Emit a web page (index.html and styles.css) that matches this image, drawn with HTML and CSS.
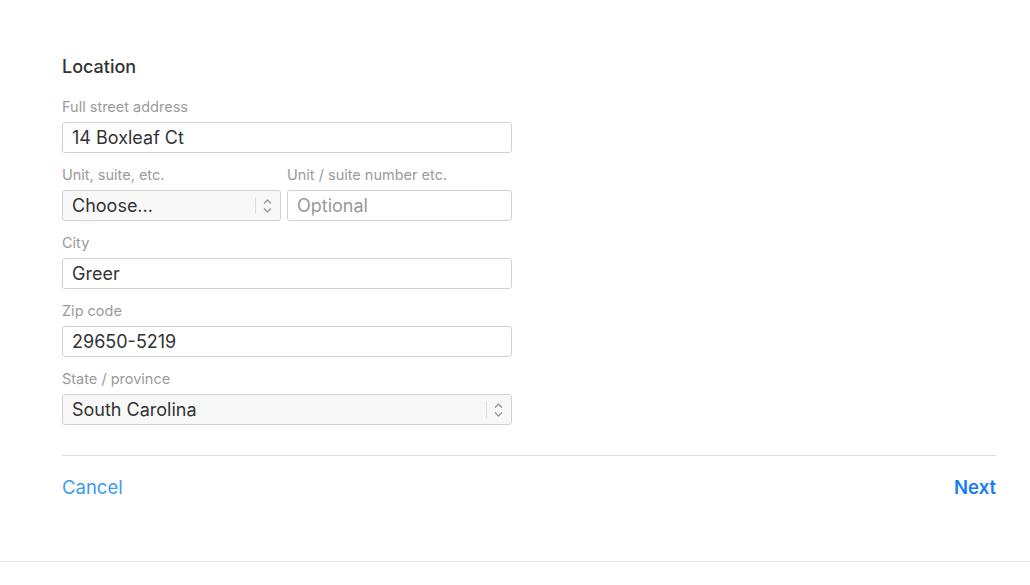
FILE: index.html
```html
<!DOCTYPE html>
<html lang="en">
<head>
    <meta charset="UTF-8">
    <title>Location</title>
    <link rel="stylesheet" href="styles.css">
</head>
<body>
    <div class="page">
        <div class="container">
            <h1>Location</h1>

            <form class="fields">
                <div class="field">
                    <label class="field-label">Full street address</label>
                    <div class="text-input">14 Boxleaf Ct</div>
                </div>

                <div class="field-row">
                    <div class="field">
                        <label class="field-label">Unit, suite, etc.</label>
                        <div class="select-input">
                            <span>Choose...</span>
                            <span class="select-arrows">
                                <svg width="9" height="16" viewBox="0 0 9 16"><path d="M1 5.5 L4.5 2 L8 5.5 M1 10.5 L4.5 14 L8 10.5" fill="none" stroke="#8a8a8a" stroke-width="1.1"/></svg>
                            </span>
                        </div>
                    </div>
                    <div class="field">
                        <label class="field-label">Unit / suite number etc.</label>
                        <div class="text-input placeholder">Optional</div>
                    </div>
                </div>

                <div class="field">
                    <label class="field-label">City</label>
                    <div class="text-input">Greer</div>
                </div>

                <div class="field">
                    <label class="field-label">Zip code</label>
                    <div class="text-input">29650-5219</div>
                </div>

                <div class="field">
                    <label class="field-label">State / province</label>
                    <div class="select-input">
                        <span>South Carolina</span>
                        <span class="select-arrows">
                            <svg width="9" height="16" viewBox="0 0 9 16"><path d="M1 5.5 L4.5 2 L8 5.5 M1 10.5 L4.5 14 L8 10.5" fill="none" stroke="#8a8a8a" stroke-width="1.1"/></svg>
                        </span>
                    </div>
                </div>
            </form>

            <div class="footer">
                <a href="#" class="link-button">Cancel</a>
                <a href="#" class="link-button primary">Next</a>
            </div>
        </div>
    </div>
</body>
</html>
```

FILE: styles.css
```css
body {
    font-family: Inter, "Open Sans", Arial, sans-serif;
    margin: 0;
    background-color: white;
    color: #333;
}
.page {
    height: 561px;
    border-bottom: 1px solid #e3e3e3;
}
.container {
    width: 934px;
    margin-left: 62px;
    padding-top: 56px;
}
h1 {
    font-size: 18px;
    font-weight: 500;
    line-height: 22px;
    margin: 0 0 19px 0;
    color: #333;
}
.fields {
    width: 450px;
}
.field {
    margin-bottom: 12px;
}
.field-label {
    display: block;
    font-size: 14.5px;
    line-height: 20px;
    color: #9a9a9a;
    margin-bottom: 5px;
}
.field-row {
    display: grid;
    grid-template-columns: 219px 225px;
    gap: 6px;
}
.text-input,
.select-input {
    box-sizing: border-box;
    height: 31px;
    border: 1px solid #d2d2d2;
    border-radius: 3px;
    padding: 0 9px;
    font-size: 18px;
    line-height: 29px;
    color: #333;
    background-color: white;
}
.placeholder {
    color: #999;
}
.select-input {
    display: flex;
    justify-content: space-between;
    background-color: #f8f8f8;
    padding-right: 8px;
}
.select-arrows {
    display: flex;
    align-items: center;
    border-left: 1px solid #e0e0e0;
    height: 17px;
    margin-top: 6px;
    padding-left: 7px;
}
.footer {
    margin-top: 30px;
    border-top: 1px solid #ddd;
    padding-top: 19px;
    display: flex;
    justify-content: space-between;
}
.link-button {
    font-size: 18.5px;
    line-height: 24px;
    color: #3b99f5;
    text-decoration: none;
}
.link-button.primary {
    font-weight: 600;
    color: #1a7cf2;
}
```
